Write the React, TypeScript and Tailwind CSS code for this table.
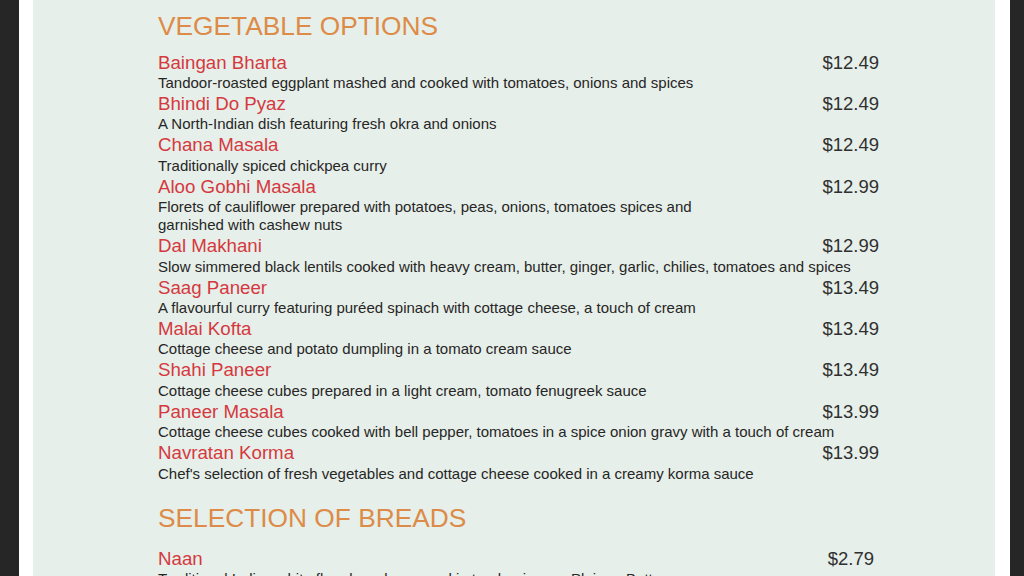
import React from "react";

type Item = { name: string; desc: string[]; price: string; priceCls?: string };

const veg: Item[] = [
  { name: "Baingan Bharta", desc: ["Tandoor-roasted eggplant mashed and cooked with tomatoes, onions and spices"], price: "$12.49" },
  { name: "Bhindi Do Pyaz", desc: ["A North-Indian dish featuring fresh okra and onions"], price: "$12.49" },
  { name: "Chana Masala", desc: ["Traditionally spiced chickpea curry"], price: "$12.49" },
  {
    name: "Aloo Gobhi Masala",
    desc: ["Florets of cauliflower prepared with potatoes, peas, onions, tomatoes spices and", "garnished with cashew nuts"],
    price: "$12.99",
  },
  { name: "Dal Makhani", desc: ["Slow simmered black lentils cooked with heavy cream, butter, ginger, garlic, chilies, tomatoes and spices"], price: "$12.99" },
  { name: "Saag Paneer", desc: ["A flavourful curry featuring puréed spinach with cottage cheese, a touch of cream"], price: "$13.49" },
  { name: "Malai Kofta", desc: ["Cottage cheese and potato dumpling in a tomato cream sauce"], price: "$13.49" },
  { name: "Shahi Paneer", desc: ["Cottage cheese cubes prepared in a light cream, tomato fenugreek sauce"], price: "$13.49" },
  { name: "Paneer Masala", desc: ["Cottage cheese cubes cooked with bell pepper, tomatoes in a spice onion gravy with a touch of cream"], price: "$13.99" },
  { name: "Navratan Korma", desc: ["Chef's selection of fresh vegetables and cottage cheese cooked in a creamy korma sauce"], price: "$13.99" },
];

const breads: Item[] = [
  { name: "Naan", desc: ["Traditional Indian white flour bread prepared in tandoori oven. Plain or Butter"], price: "$2.79", priceCls: "mr-[5px]" },
];

function Row({ item }: { item: Item }) {
  return (
    <div className="w-[721px]">
      <div className="flex justify-between items-baseline">
        <span className="text-[18.7px] leading-[23.4px] text-[#d5393f]">{item.name}</span>
        <span className={"text-[18.5px] leading-[23.4px] text-[#303030] " + (item.priceCls ?? "")}>{item.price}</span>
      </div>
      {item.desc.map((d, i) => (
        <div key={i} className="text-[15px] leading-[18px] text-[#262626] whitespace-nowrap">
          {d}
        </div>
      ))}
    </div>
  );
}

export default function App() {
  return (
    <div
      className="w-[1024px] h-[576px] overflow-hidden flex bg-[#262626]"
      style={{ fontFamily: '"Liberation Sans", Arial, sans-serif' }}
    >
      <div className="w-[19px] shrink-0 bg-[#262626]" />
      <div className="flex-1 flex flex-col">
        <div className="h-px bg-[#2a2a2a] w-full" />
        <div className="flex-1 flex">
          <div className="w-[14px] shrink-0 bg-white" />
          <div className="flex-1 bg-[#e6efe9] pl-[125px] pt-[11px]">
            <div className="text-[26.3px] leading-[30px] text-[#dd8b48]">VEGETABLE OPTIONS</div>
            <div className="mt-[9.5px] flex flex-col">
              {veg.map((it) => (
                <Row key={it.name} item={it} />
              ))}
            </div>
            <div className="mt-[20px] text-[26.3px] leading-[30px] text-[#dd8b48]">SELECTION OF BREADS</div>
            <div className="mt-[14px] flex flex-col">
              {breads.map((it) => (
                <Row key={it.name} item={it} />
              ))}
            </div>
          </div>
          <div className="w-[15px] shrink-0 bg-white" />
        </div>
      </div>
      <div className="w-[14px] shrink-0 bg-[#262626]" />
    </div>
  );
}
